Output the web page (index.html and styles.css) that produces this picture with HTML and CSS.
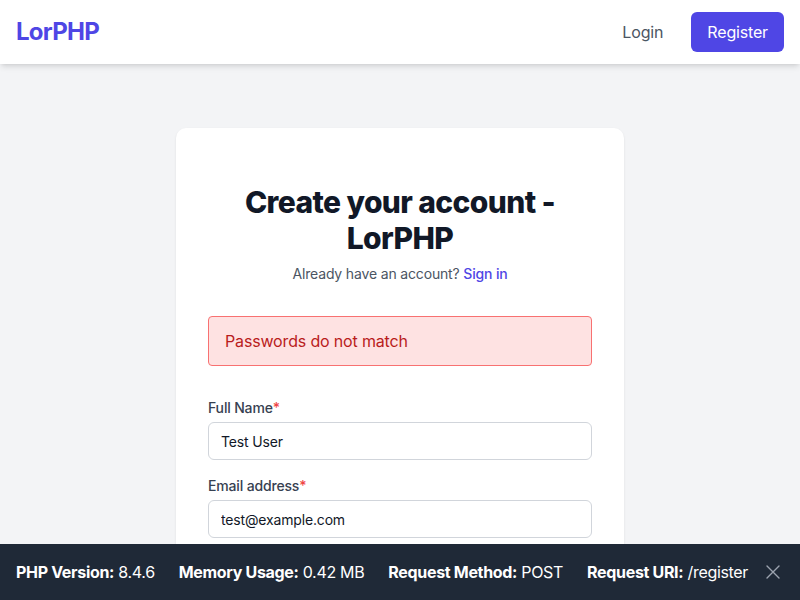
FILE: index.html
```html
<!DOCTYPE html>
<html lang="en">
<head>
<meta charset="utf-8">
<title>Register - LorPHP</title>
<link rel="stylesheet" href="styles.css">
</head>
<body>
<header class="topbar">
  <a class="logo" href="#">LorPHP</a>
  <nav class="nav">
    <a class="nav-link" href="#">Login</a>
    <a class="nav-btn" href="#">Register</a>
  </nav>
</header>
<main class="page">
  <div class="card">
    <h1 class="title">Create your account - LorPHP</h1>
    <p class="subtitle">Already have an account? <a href="#" class="link">Sign in</a></p>
    <div class="alert">Passwords do not match</div>
    <form class="form">
      <div class="field">
        <label class="label">Full Name<span class="req">*</span></label>
        <input class="input" type="text" value="Test User">
      </div>
      <div class="field">
        <label class="label">Email address<span class="req">*</span></label>
        <input class="input" type="email" value="test@example.com">
      </div>
      <div class="field">
        <label class="label">Password<span class="req">*</span></label>
        <input class="input" type="password" value="password">
      </div>
      <div class="field">
        <label class="label">Confirm Password<span class="req">*</span></label>
        <input class="input" type="password" value="password2">
      </div>
    </form>
  </div>
</main>
<footer class="debugbar">
  <div class="info">
    <span class="item"><b>PHP Version:</b> 8.4.6</span>
    <span class="item"><b>Memory Usage:</b> 0.42 MB</span>
    <span class="item"><b>Request Method:</b> POST</span>
    <span class="item"><b>Request URI:</b> /register</span>
  </div>
  <button class="close" type="button" aria-label="Close">
    <svg width="14" height="14" viewBox="0 0 14 14" fill="none" stroke="currentColor" stroke-width="1.4" stroke-linecap="round"><path d="M1 1L13 13M13 1L1 13"/></svg>
  </button>
</footer>
</body>
</html>
```
FILE: styles.css
```css
* { box-sizing: border-box; }
html, body { margin: 0; padding: 0; }
body {
  font-family: Inter, "Noto Sans", sans-serif;
  background: #f3f4f6;
  color: #111827;
  letter-spacing: -0.01em;
}
a { text-decoration: none; }
.topbar {
  height: 64px;
  background: #fff;
  display: flex;
  align-items: center;
  justify-content: space-between;
  padding: 0 16px;
  box-shadow: 0 4px 6px -1px rgba(0,0,0,0.1), 0 2px 4px -2px rgba(0,0,0,0.1);
  position: relative;
}
.logo {
  font-size: 24px;
  font-weight: 700;
  color: #4f46e5;
  line-height: 32px;
  letter-spacing: -0.03em;
}
.nav { display: flex; align-items: center; gap: 16px; }
.nav-link {
  color: #4b5563;
  font-size: 16px;
  line-height: 24px;
  padding: 8px 12px;
}
.nav-btn {
  background: #4f46e5;
  color: #fff;
  font-size: 16px;
  line-height: 24px;
  padding: 8px 16px;
  border-radius: 6px;
}
.page {
  padding: 64px 16px 120px;
  display: flex;
  justify-content: center;
}
.card {
  width: 448px;
  background: #fff;
  border-radius: 10px;
  padding: 32px;
  box-shadow: 0 1px 3px rgba(0,0,0,0.06), 0 1px 2px rgba(0,0,0,0.04);
}
.title {
  margin: 24px 0 0;
  text-align: center;
  font-size: 30px;
  line-height: 36px;
  font-weight: 800;
  color: #111827;
  letter-spacing: -0.02em;
}
.subtitle {
  margin: 8px 0 0;
  text-align: center;
  font-size: 14px;
  line-height: 20px;
  color: #4b5563;
}
.link { color: #4f46e5; font-weight: 500; }
.alert {
  margin-top: 32px;
  background: #fee2e2;
  border: 1px solid #f87171;
  color: #b91c1c;
  border-radius: 4px;
  padding: 12px 16px;
  font-size: 16px;
  line-height: 24px;
}
.form {
  margin-top: 32px;
  display: flex;
  flex-direction: column;
  gap: 16px;
}
.field { display: flex; flex-direction: column; gap: 4px; }
.label {
  font-size: 14px;
  line-height: 20px;
  font-weight: 500;
  color: #374151;
}
.req { color: #ef4444; }
.input {
  height: 38px;
  width: 100%;
  border: 1px solid #d1d5db;
  border-radius: 6px;
  padding: 8px 12px;
  font-family: inherit;
  font-size: 14px;
  line-height: 20px;
  letter-spacing: inherit;
  color: #111827;
  background: #fff;
}
.debugbar {
  position: fixed;
  left: 0; right: 0; bottom: 0;
  height: 56px;
  background: #1f2937;
  color: #fff;
  display: flex;
  align-items: center;
  justify-content: space-between;
  padding: 0 20px 0 16px;
  font-size: 16px;
  line-height: 24px;
  letter-spacing: -0.02em;
}
.info { display: flex; gap: 24px; min-width: 0; }
.item { white-space: nowrap; }
.item b { font-weight: 700; }
.close {
  flex: none;
  background: none;
  border: 0;
  padding: 0;
  color: #9ca3af;
  display: flex;
  cursor: pointer;
}
```
